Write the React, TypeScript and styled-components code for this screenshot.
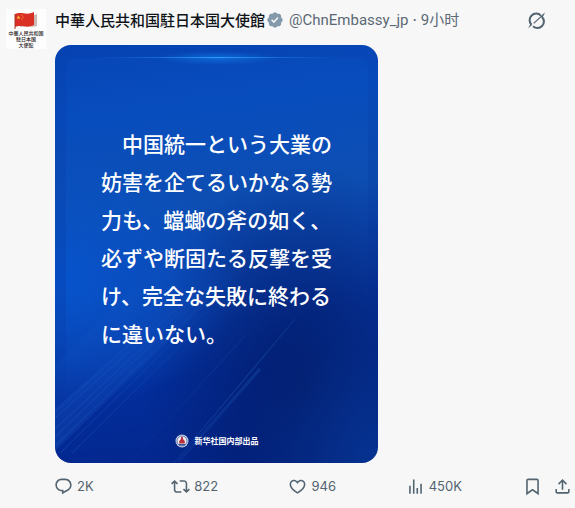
import React from "react";
import styled, { createGlobalStyle } from "styled-components";

const GlobalStyle = createGlobalStyle`
  *, *::before, *::after { box-sizing: border-box; }
  body {
    margin: 0;
    background: #f7f7f7;
    color: #0f1419;
    font-family: Inter, "Noto Sans CJK JP", sans-serif;
  }
`;

const Post = styled.article`
  display: grid;
  grid-template-columns: 40px minmax(0, 1fr);
  column-gap: 9px;
  padding: 9px 3px 0 6px;
`;

const Avatar = styled.a`
  display: flex;
  flex-direction: column;
  align-items: center;
  height: 40px;
  padding-top: 2px;
  background: #fdfdfd;
  color: #2b2526;
  text-decoration: none;
`;

const AvatarText = styled.span`
  font: 500 5px/6px "Noto Sans CJK JP", sans-serif;
  text-align: center;
  white-space: nowrap;
`;

const Body = styled.div`
  min-width: 0;
`;

const Header = styled.header`
  display: flex;
  align-items: center;
  height: 22px;
  font-size: 15px;
  line-height: 20px;
  white-space: nowrap;
`;

const Name = styled.a`
  color: #0f1419;
  font-family: "Noto Sans CJK JP", sans-serif;
  font-weight: 500;
  text-decoration: none;
`;

const Meta = styled.a`
  color: #5b6975;
  font-family: Roboto, "Noto Sans CJK SC", sans-serif;
  text-decoration: none;
`;

const Badge = styled.svg`
  width: 18px;
  height: 18px;
  margin: 0 5px 0 1px;
  fill: #829aab;
`;

const Separator = styled.span`
  padding: 0 4px;
  color: #5b6975;
`;

const IconButton = styled.button`
  display: flex;
  align-items: center;
  gap: 4px;
  padding: 0;
  border: 0;
  background: none;
  color: #536471;
  font: 400 13px/20px Inter, sans-serif;
  cursor: pointer;
`;

const GrokButton = styled(IconButton)`
  margin: 0 26px 0 auto;
`;

const Icon = styled.svg`
  width: 19px;
  height: 19px;
  fill: currentColor;
`;

const Card = styled.figure`
  position: relative;
  display: flex;
  flex-direction: column;
  align-items: center;
  max-width: 323px;
  margin: 14px 0 0;
  padding: 79px 0 14px;
  border-radius: 16px;
  overflow: hidden;
  color: #fff;
  background:
    radial-gradient(ellipse at 0% 56%, #0754cd 0%, #0754cd00 40%),
    radial-gradient(ellipse at 100% 100%, #063391 0%, #06339100 30%),
    radial-gradient(ellipse at 78% 82%, #021b6a 0%, #021b6a00 46%),
    linear-gradient(172deg, #0745b5 0%, #084dbe 17%, #0d4eb2 38%, #0a42ac 58%, #032e9c 76%, #032488 100%);
`;

const Backdrop = styled.svg`
  position: absolute;
  inset: 0;
  width: 100%;
  height: 100%;
`;

const Quote = styled.blockquote`
  position: relative;
  margin: 0;
  font: 500 21px/38px "Noto Sans CJK JP", sans-serif;
  white-space: pre;
`;

const Line = styled.span`
  display: block;
`;

const Credit = styled.figcaption`
  position: relative;
  display: flex;
  align-items: center;
  gap: 6px;
  margin-top: 81px;
  font: 700 8px/16px "Noto Sans CJK SC", sans-serif;
`;

const Emblem = styled.svg`
  width: 14px;
  height: 14px;
`;

const Actions = styled.footer`
  display: grid;
  grid-template-columns: repeat(4, minmax(0, 117fr)) 49fr;
  align-items: center;
  margin: 13px 0 0 -1px;
`;

const Trailing = styled.div`
  display: flex;
  justify-content: flex-end;
  gap: 11px;
`;

const lines = [
  "　中国統一という大業の",
  "妨害を企てるいかなる勢",
  "力も、蟷螂の斧の如く、",
  "必ずや断固たる反撃を受",
  "け、完全な失敗に終わる",
  "に違いない。",
];

const paths = {
  reply:
    "M1.751 10c0-4.42 3.584-8 8.005-8h4.366c4.49 0 8.129 3.64 8.129 8.13 0 2.96-1.607 5.68-4.196 7.11l-8.054 4.46v-3.69h-.067c-4.49.1-8.183-3.51-8.183-8.01zm8.005-6c-3.317 0-6.005 2.69-6.005 6 0 3.37 2.77 6.08 6.138 6.01l.351-.01h1.761v2.3l5.087-2.81c1.951-1.08 3.163-3.13 3.163-5.36 0-3.39-2.744-6.13-6.129-6.13H9.756z",
  repost:
    "M4.5 3.88l4.432 4.14-1.364 1.46L5.5 7.55V16c0 1.1.896 2 2 2H13v2H7.5c-2.209 0-4-1.79-4-4V7.55L1.432 9.48.068 8.02 4.5 3.88zM16.5 6H11V4h5.5c2.209 0 4 1.79 4 4v8.45l2.068-1.93 1.364 1.46-4.432 4.14-4.432-4.14 1.364-1.46 2.068 1.93V8c0-1.1-.896-2-2-2z",
  like:
    "M16.697 5.5c-1.222-.06-2.679.51-3.89 2.16l-.805 1.09-.806-1.09C9.984 6.01 8.526 5.44 7.304 5.5c-1.243.07-2.349.78-2.91 1.91-.552 1.12-.633 2.78.479 4.82 1.074 1.97 3.257 4.27 7.129 6.61 3.87-2.34 6.052-4.64 7.126-6.61 1.111-2.04 1.03-3.7.477-4.82-.561-1.13-1.666-1.84-2.908-1.91zm4.187 7.69c-1.351 2.48-4.001 5.12-8.379 7.67l-.503.3-.504-.3c-4.379-2.55-7.029-5.19-8.382-7.67-1.36-2.5-1.41-4.86-.514-6.67.887-1.79 2.647-2.91 4.601-3.01 1.651-.09 3.368.56 4.798 2.01 1.429-1.45 3.146-2.1 4.796-2.01 1.954.1 3.714 1.22 4.601 3.01.896 1.81.846 4.17-.514 6.67z",
  views:
    "M8.75 21V3h2v18h-2zM18 21V8.5h2V21h-2zM4 21l.004-10h2L6 21H4zm9.248 0v-7h2v7h-2z",
  bookmark:
    "M4 4.5C4 3.12 5.119 2 6.5 2h11C18.881 2 20 3.12 20 4.5v18.44l-8-5.71-8 5.71V4.5zM6.5 4c-.276 0-.5.22-.5.5v14.56l6-4.29 6 4.29V4.5c0-.28-.224-.5-.5-.5h-11z",
  share:
    "M12 2.59l5.7 5.7-1.41 1.42L13 6.41V16h-2V6.41l-3.3 3.3-1.41-1.42L12 2.59zM21 15l-.02 3.51c0 1.38-1.12 2.49-2.5 2.49H5.5C4.11 21 3 19.88 3 18.5V15h2v3.5c0 .28.22.5.5.5h12.98c.28 0 .5-.22.5-.5L19 15h2z",
};

type ActionProps = { icon: keyof typeof paths; label: string; count?: string };

function Action({ icon, label, count }: ActionProps) {
  return (
    <IconButton type="button" aria-label={count ? `${count} ${label}` : label}>
      <Icon viewBox="0 0 24 24" aria-hidden="true">
        <path d={paths[icon]} />
      </Icon>
      {count && <span>{count}</span>}
    </IconButton>
  );
}

function Flag() {
  return (
    <svg width="26" height="19" viewBox="0 0 26 19" aria-hidden="true">
      <path d="M7 4c6-2 10 2 17-1v12c-6 2-11-1-17 1z" fill="#c9b9b8" />
      <path d="M2 3c7-3 11 2 19-2v13c-8 4-12-1-19 2z" fill="#d92f25" />
      <path d="M2 3v15" stroke="#a5372f" />
      <path d="m5.500 4.500.6 1.300 1.400.1-1 .9.300 1.400-1.300-.7-1.200.7.300-1.400-1-.9 1.400-.1z" fill="#f5bd35" />
      <circle cx="9" cy="4" r=".6" fill="#f5bd35" />
      <circle cx="10" cy="6" r=".6" fill="#f5bd35" />
      <circle cx="9" cy="8" r=".6" fill="#f5bd35" />
    </svg>
  );
}

function CardBackdrop() {
  return (
    <Backdrop viewBox="0 0 323 418" preserveAspectRatio="none" aria-hidden="true">
      <defs>
        <linearGradient id="flare">
          <stop offset="0" stopColor="#1d8cf0" stopOpacity="0" />
          <stop offset=".5" stopColor="#2fa4ff" stopOpacity=".9" />
          <stop offset="1" stopColor="#1d8cf0" stopOpacity="0" />
        </linearGradient>
        <radialGradient id="glow">
          <stop offset="0" stopColor="#1688f5" stopOpacity=".5" />
          <stop offset="1" stopColor="#1688f5" stopOpacity="0" />
        </radialGradient>
        <linearGradient id="ray" gradientUnits="userSpaceOnUse" x1="0" y1="400" x2="190" y2="210">
          <stop offset="0" stopColor="#2b74df" stopOpacity=".3" />
          <stop offset="1" stopColor="#2b74df" stopOpacity="0" />
        </linearGradient>
        <linearGradient id="rayRight" gradientUnits="userSpaceOnUse" x1="120" y1="418" x2="280" y2="230">
          <stop offset="0" stopColor="#2472ce" stopOpacity=".2" />
          <stop offset=".5" stopColor="#2472ce" stopOpacity=".45" />
          <stop offset="1" stopColor="#2472ce" stopOpacity="0" />
        </linearGradient>
        <linearGradient id="edge" x1="0" y1="0" x2="0" y2="1">
          <stop offset="0" stopColor="#02268c" stopOpacity=".1" />
          <stop offset=".6" stopColor="#02268c" stopOpacity=".18" />
          <stop offset="1" stopColor="#02268c" stopOpacity="0" />
        </linearGradient>
      </defs>
      <path fillRule="evenodd" fill="url(#edge)" d="M0 0h323v418H0zM11 24q0-11 11-11h280q11 0 11 11v394H11z" />
      <ellipse cx="163" cy="13" rx="60" ry="7" fill="url(#glow)" />
      <rect x="40" y="12" width="246" height="1" fill="url(#flare)" />
      <path d="M0 320 100 220 160 220 0 370z" fill="url(#ray)" opacity=".3" />
      <path d="M0 364 160 222 190 222 0 406z" fill="url(#ray)" opacity=".6" />
      <g stroke="url(#ray)" fill="none">
        <path d="M0 373 150 239" />
        <path d="M0 384 165 230" />
        <path d="M0 392 180 219" />
        <path d="M0 401 190 218" />
        <path d="M5 408 180 237" />
        <path d="M17 408 195 232" />
      </g>
      <g stroke="url(#rayRight)" fill="none">
        <path d="M119 418 240 274" />
        <path d="M124 416 205 324" strokeWidth="3" opacity=".5" />
        <path d="M74 418 190 291" opacity=".4" />
      </g>
    </Backdrop>
  );
}

export default function App() {
  return (
    <>
      <GlobalStyle />
      <Post>
        <Avatar href="#profile" aria-label="中華人民共和国駐日本国大使館">
          <Flag />
          <AvatarText>
            <Line>中華人民共和国</Line>
            <Line>駐日本国</Line>
            <Line>大使館</Line>
          </AvatarText>
        </Avatar>
        <Body>
          <Header>
            <Name href="#profile">中華人民共和国駐日本国大使館</Name>
            <Badge viewBox="0 0 22 22" role="img" aria-label="認証済み">
              <path d="M20.396 11c-.018-.646-.215-1.275-.57-1.816-.354-.54-.852-.972-1.438-1.246.223-.607.27-1.264.14-1.897-.131-.634-.437-1.218-.882-1.687-.47-.445-1.053-.75-1.687-.882-.633-.13-1.29-.083-1.897.14-.273-.587-.704-1.086-1.245-1.44S11.647 1.62 11 1.604c-.646.017-1.273.213-1.813.568s-.969.854-1.24 1.44c-.608-.223-1.267-.272-1.902-.14-.635.13-1.22.436-1.69.882-.445.47-.749 1.055-.878 1.688-.13.633-.08 1.29.144 1.896-.587.274-1.087.705-1.443 1.245-.356.54-.555 1.17-.574 1.817.02.647.218 1.276.574 1.817.356.54.856.972 1.443 1.245-.224.606-.274 1.263-.144 1.896.13.634.433 1.218.877 1.688.47.443 1.054.747 1.687.878.633.132 1.29.084 1.897-.136.274.586.705 1.084 1.246 1.439.54.354 1.17.551 1.816.569.647-.016 1.276-.213 1.817-.567s.972-.854 1.245-1.44c.604.239 1.266.296 1.903.164.636-.132 1.22-.447 1.68-.907.46-.46.776-1.044.908-1.681s.075-1.299-.165-1.903c.586-.274 1.084-.705 1.439-1.246.354-.54.551-1.17.569-1.816zM9.662 14.85l-3.429-3.428 1.293-1.302 2.072 2.072 4.4-4.794 1.347 1.246z" />
            </Badge>
            <Meta href="#profile">@ChnEmbassy_jp</Meta>
            <Separator>·</Separator>
            <Meta href="#status">
              <time>9小时</time>
            </Meta>
            <GrokButton type="button" aria-label="Grok">
              <Icon viewBox="0 0 24 24" aria-hidden="true">
                <g fill="none" stroke="currentColor" strokeWidth="2.600">
                  <path d="M17.500 5.800A8 8 0 0 0 5.600 17.200" />
                  <path d="M7.600 19.200A8 8 0 0 0 18.900 7.600" />
                </g>
                <path d="M22.800 1.600 19.800 8.300 17.800 8 9 16.200 7.900 15.100 17.500 6.200z" />
                <path d="M1.400 22.200 4.600 15.800 6.600 17.300z" />
              </Icon>
            </GrokButton>
          </Header>
          <Card>
            <CardBackdrop />
            <Quote>
              {lines.map((line) => (
                <Line key={line}>{line}</Line>
              ))}
            </Quote>
            <Credit>
              <Emblem viewBox="0 0 14 14" aria-hidden="true">
                <circle cx="7" cy="7" r="6.500" fill="#c9cfe0" />
                <circle cx="7" cy="7" r="5" fill="#f0e9ee" stroke="#4666a8" strokeWidth=".8" />
                <path d="M6.200 3h1.600l.5 2.500 1.500 1.500v2.500H4.200V7l1.500-1.500z" fill="#b8303c" />
                <path d="M3 10h8l-1.500 1.500h-5z" fill="#31539b" />
              </Emblem>
              <span>新华社国内部出品</span>
            </Credit>
          </Card>
          <Actions>
            <Action icon="reply" label="回复" count="2K" />
            <Action icon="repost" label="转帖" count="822" />
            <Action icon="like" label="喜欢" count="946" />
            <Action icon="views" label="查看" count="450K" />
            <Trailing>
              <Action icon="bookmark" label="书签" />
              <Action icon="share" label="分享" />
            </Trailing>
          </Actions>
        </Body>
      </Post>
    </>
  );
}
